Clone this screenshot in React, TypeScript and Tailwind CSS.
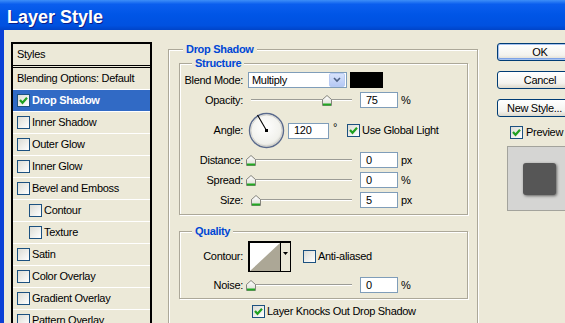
import React from 'react';

const styleItems = [
  { name: 'Drop Shadow', checked: true, selected: true },
  { name: 'Inner Shadow' },
  { name: 'Outer Glow' },
  { name: 'Inner Glow' },
  { name: 'Bevel and Emboss' },
  { name: 'Contour', indent: true },
  { name: 'Texture', indent: true },
  { name: 'Satin' },
  { name: 'Color Overlay' },
  { name: 'Gradient Overlay' },
  { name: 'Pattern Overlay' },
];

function Check({ checked = false }: { checked?: boolean }) {
  return (
    <span className="w-[13px] h-[13px] shrink-0 border border-[#1c5180] bg-[linear-gradient(135deg,#dcdcd5,#ffffff)] flex items-center justify-center">
      {checked && (
        <svg width="11" height="11" viewBox="0 0 11 11">
          <path d="M2 5 L4.5 7.8 L9 2.8" fill="none" stroke="#21a121" strokeWidth="2.2" />
        </svg>
      )}
    </span>
  );
}

function Thumb({ left }: { left: number }) {
  return (
    <svg
      width="10"
      height="12"
      viewBox="0 0 10 12"
      className="absolute top-[3px]"
      style={{ left }}
    >
      <defs>
        <linearGradient id="th" x1="0" y1="0" x2="0" y2="1">
          <stop offset="0" stopColor="#ffffff" />
          <stop offset="1" stopColor="#dcdcd4" />
        </linearGradient>
      </defs>
      <path d="M0.5 4.5 L5 0.5 L9.5 4.5 V10.5 H0.5 Z" fill="url(#th)" stroke="#84847c" />
      <rect x="1" y="8.5" width="8" height="2" fill="#22a822" />
    </svg>
  );
}

function Slider({ pct }: { pct: number }) {
  // thumb centre runs over the 101px track
  return (
    <div className="relative ml-[3px] w-[111px] h-[16px] shrink-0 flex items-center">
      <div className="mx-[5px] flex-1 h-[2px] border-t border-[#9c9c96] bg-white" />
      <Thumb left={Math.round(pct * 101)} />
    </div>
  );
}

function Field({ value, w = 'w-[38px]', className = '' }: { value: string; w?: string; className?: string }) {
  return (
    <div className={`${w} h-[16px] shrink-0 border border-[#7f9db9] bg-white pl-[5px] flex items-center ${className}`}>
      {value}
    </div>
  );
}

function SliderRow({ label, pct, value, unit, className = '' }: { label: string; pct: number; value: string; unit: string; className?: string }) {
  return (
    <div className={`flex items-center h-[16px] ${className}`}>
      <span className="w-[63px] shrink-0 text-right">{label}</span>
      <Slider pct={pct} />
      <Field value={value} className="ml-[3px]" />
      <span className="ml-[3px]">{unit}</span>
    </div>
  );
}

function Group({ title, className = '', children }: { title: string; className?: string; children: React.ReactNode }) {
  return (
    <div className={`relative shrink-0 border border-[#aca899] shadow-[inset_1px_1px_0_#fff,1px_1px_0_#fff] ${className}`}>
      <span className="absolute -top-[8px] px-[3px] bg-[#ece9d8] font-bold text-[#0046d5] leading-[14px] left-[var(--lg)]">
        {title}
      </span>
      {children}
    </div>
  );
}

function XpButton({ children, primary = false, className = '' }: { children: React.ReactNode; primary?: boolean; className?: string }) {
  return (
    <div
      className={`h-[18px] w-[86px] shrink-0 rounded-[3px] border border-[#003c74] bg-[linear-gradient(to_bottom,#ffffff,#f4f3ee_70%,#dcd8cb)] flex items-center justify-center ${
        primary ? 'shadow-[inset_0_0_0_1px_#a6c2f0,inset_0_-1px_0_1px_#7fa3e6]' : ''
      } ${className}`}
    >
      {children}
    </div>
  );
}

export default function App() {
  return (
    <div className="w-[565px] h-[323px] overflow-hidden bg-[#ece9d8] text-black text-[11px] leading-[13px] tracking-[-0.3px] font-['Liberation_Sans',Arial,sans-serif]">
      {/* title bar */}
      <div className="h-[30px] pl-[7px] pt-[8px] bg-[linear-gradient(to_bottom,#3d8ef8_0%,#0a5eee_14%,#0055e6_50%,#0051e0_85%,#0044c8_100%)]">
        <span className="text-white font-bold text-[18px] leading-[18px] tracking-normal [text-shadow:1px_1px_0_#0a1e8a]">
          Layer Style
        </span>
      </div>

      <div className="flex h-[293px] overflow-hidden">
        <div className="w-[4px] shrink-0 bg-[#0a3fd6]" />

        {/* styles list */}
        <div className="ml-[7px] mt-[12px] w-[141px] h-[300px] shrink-0 border-2 border-black">
          <div className="h-[24px] border-b-[3px] border-double border-black pl-[4px] flex items-center">Styles</div>
          <div className="h-[22px] border-b border-white pl-[4px] flex items-center">Blending Options: Default</div>
          {styleItems.map((s) => (
            <div
              key={s.name}
              className={`h-[22px] border-b border-white flex items-center ${s.indent ? 'pl-[16px]' : 'pl-[4px]'} ${
                s.selected ? 'bg-[#316ac5] text-white font-bold' : ''
              }`}
            >
              <Check checked={s.checked} />
              <span className="ml-[2px]">{s.name}</span>
            </div>
          ))}
        </div>

        {/* drop shadow settings */}
        <Group title="Drop Shadow" className="ml-[16px] mt-[19px] w-[310px] h-[320px] [--lg:14px]">
          <Group title="Structure" className="ml-[10px] mt-[13px] w-[289px] pt-[8px] pb-[6px] [--lg:12px]">
            <div className="flex items-center h-[16px]">
              <span className="w-[63px] shrink-0 text-right">Blend Mode:</span>
              <div className="ml-[5px] w-[99px] h-[16px] shrink-0 border border-[#7f9db9] bg-white flex items-center">
                <span className="pl-[3px] flex-1">Multiply</span>
                <span className="w-[16px] h-[14px] mr-[1px] rounded-[2px] border border-[#b9cbf3] bg-[linear-gradient(to_bottom,#d8e3fb,#b5c8f4)] flex items-center justify-center">
                  <svg width="8" height="6" viewBox="0 0 8 6">
                    <path d="M1 1 L4 4 L7 1" fill="none" stroke="#4d6185" strokeWidth="1.6" />
                  </svg>
                </span>
              </div>
              <div className="ml-[3px] w-[33px] h-[16px] shrink-0 bg-black" />
            </div>

            <SliderRow label="Opacity:" pct={0.75} value="75" unit="%" className="mt-[4px]" />

            <div className="flex items-center h-[37px] mt-[4px]">
              <span className="w-[63px] shrink-0 text-right">Angle:</span>
              <svg width="37" height="37" viewBox="0 0 37 37" className="ml-[5px] shrink-0">
                <defs>
                  <radialGradient id="dial" cx="0.45" cy="0.4" r="0.6">
                    <stop offset="0" stopColor="#ffffff" />
                    <stop offset="0.8" stopColor="#f1f1ec" />
                    <stop offset="1" stopColor="#d6d6d0" />
                  </radialGradient>
                </defs>
                <circle cx="18.5" cy="18.5" r="17" fill="url(#dial)" stroke="#5a6a8c" strokeWidth="1.4" />
                <circle cx="18.5" cy="18.5" r="15.6" fill="none" stroke="#c9c9c4" strokeWidth="0.8" />
                <line x1="18.5" y1="18.5" x2="9.5" y2="3" stroke="#000" strokeWidth="1.1" />
                <rect x="17" y="17" width="3" height="3" fill="#000" />
              </svg>
              <Field value="120" w="w-[41px]" className="ml-[3px]" />
              <span className="ml-[4px] w-[14px] self-start mt-[9px]">°</span>
              <Check checked />
              <span className="ml-[2px]">Use Global Light</span>
            </div>

            <SliderRow label="Distance:" pct={0} value="0" unit="px" className="mt-[3px]" />
            <SliderRow label="Spread:" pct={0} value="0" unit="%" className="mt-[4px]" />
            <SliderRow label="Size:" pct={0.05} value="5" unit="px" className="mt-[4px]" />
          </Group>

          <Group title="Quality" className="ml-[10px] mt-[16px] w-[289px] pt-[9px] pb-[5px] [--lg:12px]">
            <div className="flex items-center h-[31px]">
              <span className="w-[63px] shrink-0 text-right">Contour:</span>
              <div className="ml-[5px] w-[43px] h-[31px] shrink-0 border border-black border-l-2 border-t-2 flex">
                <svg width="30" height="28" viewBox="0 0 30 28" className="bg-white">
                  <polygon points="0,28 30,0 30,28" fill="#aca796" />
                </svg>
                <div className="flex-1 border-l border-black flex justify-center pt-[9px]">
                  <svg width="5" height="3" viewBox="0 0 5 3">
                    <polygon points="0,0 5,0 2.5,3" fill="#000" />
                  </svg>
                </div>
              </div>
              <span className="ml-[12px]">
                <Check />
              </span>
              <span className="ml-[2px]">Anti-aliased</span>
            </div>
            <SliderRow label="Noise:" pct={0} value="0" unit="%" className="mt-[5px]" />
          </Group>

          <div className="mt-[6px] ml-[83px] flex items-center">
            <Check checked />
            <span className="ml-[2px]">Layer Knocks Out Drop Shadow</span>
          </div>
        </Group>

        {/* buttons and preview */}
        <div className="ml-[19px] mt-[13px] w-[86px] shrink-0 flex flex-col">
          <XpButton primary>OK</XpButton>
          <XpButton className="mt-[10px]">Cancel</XpButton>
          <XpButton className="mt-[10px] justify-start pl-[9px]">New Style...</XpButton>
          <div className="mt-[9px] ml-[13px] flex items-center">
            <Check checked />
            <span className="ml-[3px]">Preview</span>
          </div>
          <div className="mt-[7px] ml-[10px] w-[66px] h-[65px] shrink-0 border border-[#a3a39c] bg-[#d5d5d3] pl-[15px] pt-[16px]">
            <div className="w-[33px] h-[32px] rounded-[3px] bg-[#565656] shadow-[1px_1px_3px_rgba(0,0,0,0.55)]" />
          </div>
        </div>
      </div>
    </div>
  );
}
